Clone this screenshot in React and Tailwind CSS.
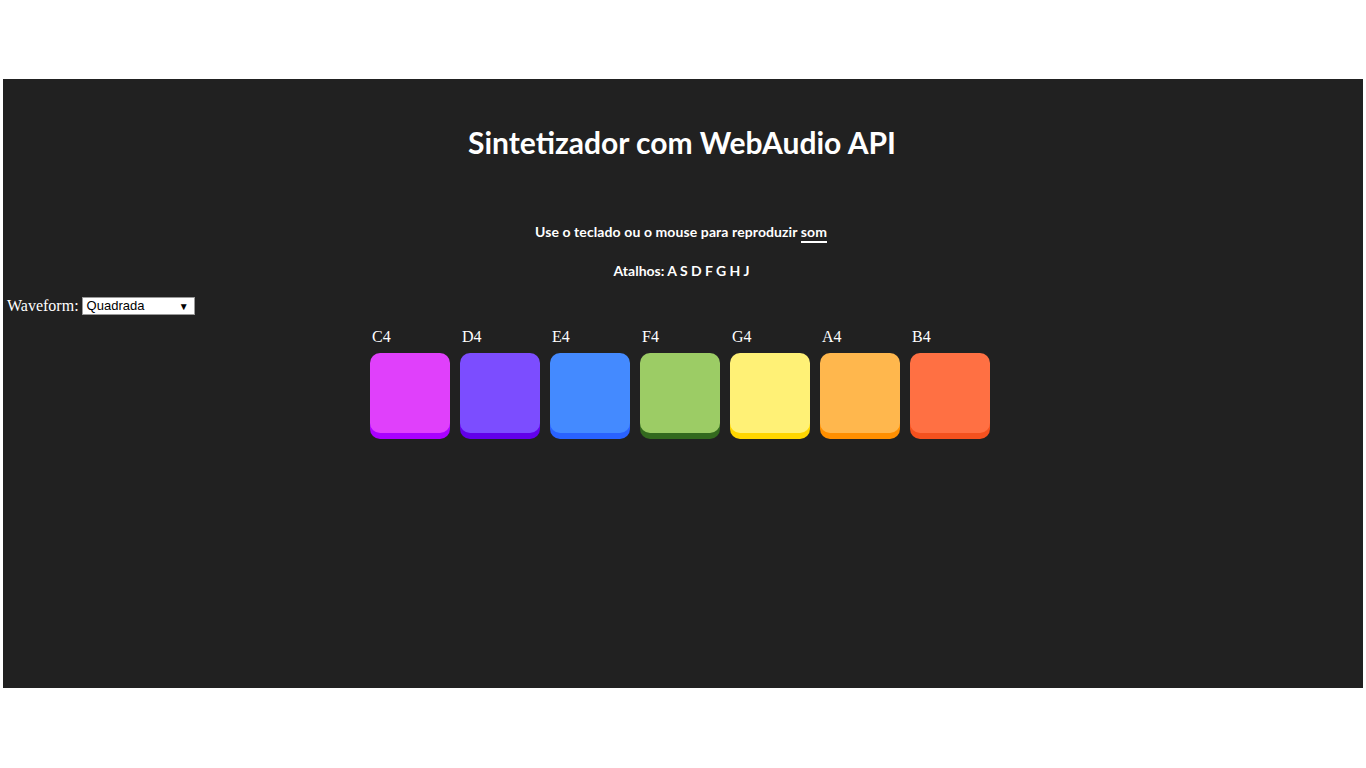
import React from "react";

const keys = [
  { n: "C4", face: "bg-[#e040fb]", shadow: "shadow-[0_6px_0_#aa00ff]" },
  { n: "D4", face: "bg-[#7c4dff]", shadow: "shadow-[0_6px_0_#6200ea]" },
  { n: "E4", face: "bg-[#448aff]", shadow: "shadow-[0_6px_0_#2962ff]" },
  { n: "F4", face: "bg-[#9ccc65]", shadow: "shadow-[0_6px_0_#33691e]" },
  { n: "G4", face: "bg-[#fff176]", shadow: "shadow-[0_6px_0_#ffd600]" },
  { n: "A4", face: "bg-[#ffb74d]", shadow: "shadow-[0_6px_0_#ff8f00]" },
  { n: "B4", face: "bg-[#ff7043]", shadow: "shadow-[0_6px_0_#f4511e]" },
];

export default function App() {
  return (
    <div className="bg-white w-[1366px] h-[768px] pt-[79px] px-[3px]">
      <div className="bg-[#212121] h-[609px] text-white">
        <h1 className="pt-[45px] pr-[2px] text-center text-[30px] leading-[36px] font-bold font-['Lato',sans-serif] tracking-[0px]">
          Sintetizador com WebAudio API
        </h1>
        <p className="mt-[63px] pr-[4px] text-center text-[14px] leading-[18px] font-bold font-['Lato',sans-serif] tracking-[0.1px]">
          Use o teclado ou o mouse para reproduzir{" "}
          <span className="border-b-2 border-white pb-[1px]">som</span>
        </p>
        <p className="mt-[21px] pr-[3px] text-center text-[14px] leading-[18px] font-bold font-['Lato',sans-serif]">
          Atalhos: A S D F G H J
        </p>
        <div className="mt-[16px] flex items-center pl-[4px] h-[20px] font-['Liberation_Serif',serif] text-[16px]">
          <span>Waveform:</span>
          <div className="ml-[3px] w-[113px] h-[18px] bg-white border border-[#999] flex items-center justify-between pl-[4px] pr-[5px] text-black font-['Liberation_Sans',sans-serif] text-[13px]">
            <span>Quadrada</span>
            <span className="text-[10px]">▼</span>
          </div>
        </div>
        <div className="mt-[12px] flex justify-center pr-[6px] gap-[10px]">
          {keys.map((k) => (
            <div key={k.n} className="w-[80px] flex flex-col">
              <div className="pl-[2px] h-[25px] leading-[18px] font-['Liberation_Serif',serif] text-[16px] text-white">
                {k.n}
              </div>
              <div className={`w-[80px] h-[80px] rounded-[10px] ${k.face} ${k.shadow}`}></div>
            </div>
          ))}
        </div>
      </div>
    </div>
  );
}
